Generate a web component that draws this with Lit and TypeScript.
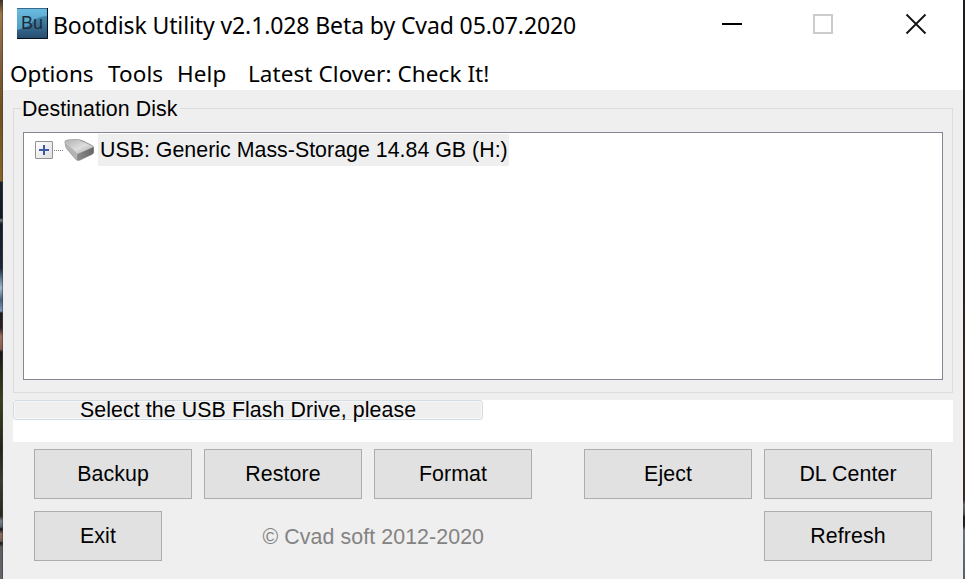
import { LitElement, html, css } from "lit";
import { customElement, property } from "lit/decorators.js";

@customElement("push-button")
class PushButton extends LitElement {
  @property() label = "";
  static styles = css`
    :host { display: block; height: 50px; }
    button {
      width: 100%; height: 100%; box-sizing: border-box; padding: 0;
      border: 1px solid #adadad; background: #e1e1e1; color: #000;
      font: inherit; letter-spacing: inherit; border-radius: 0;
    }
  `;
  render() {
    return html`<button>${this.label}</button>`;
  }
}

@customElement("app-root")
class AppRoot extends LitElement {
  static styles = css`
    :host {
      display: flex; box-sizing: border-box; width: 965px; height: 579px; overflow: hidden;
      font: 21.33px/24px "Liberation Sans", Arial, sans-serif; letter-spacing: 0.09px; color: #000;
      white-space: nowrap;
    }
    .edge-left {
      width: 3px; flex: none;
      background:
        linear-gradient(90deg, transparent 2px, rgba(60, 60, 60, 0.55) 2px),
        linear-gradient(#3c3022 0, #a07848 14px, #84603c 60px, #70501f 110px, #876525 181px, #17202c 182px,
          #101823 218px, #777f89 220px, #131b29 224px, #1b2638 268px, #5b7390 278px, #a4b9d0 288px,
          #48607e 300px, #7f9bbd 311px, #211c20 313px, #2a2022 328px, #9b6c5e 336px, #8a5d50 349px,
          #161616 352px, #2b3118 376px, #38411f 400px, #20271b 450px, #3a3c2d 480px, #29291f 516px,
          #78848e 521px, #55606b 527px, #111 529px, #8d6e61 534px, #775f54 541px, #151515 543px,
          #5d5d62 547px, #66666c 579px);
    }
    .edge-right {
      width: 2px; flex: none;
      background: linear-gradient(#1a1e24 0, #1b1b1d 160px, #241b1a 260px, #3b2523 370px, #3d2725 500px,
        #62676c 505px, #484c51 514px, #1b1c21 517px, #20242a 526px, #666d72 530px, #646c72 546px, #586167 579px);
    }
    .window { width: 960px; flex: none; display: flex; flex-direction: column; background: #efefef; }
    .title-bar, .menu { background: #fff; font-family: "Noto Sans", "Open Sans", sans-serif; }
    .title-bar { height: 50px; display: flex; align-items: flex-start; padding-left: 14px; }
    .logo { width: 31px; height: 31px; margin-top: 8px; }
    .title { font-size: 23px; line-height: 32px; margin: 9px 0 0 5px; letter-spacing: -0.11px; flex: 1; }
    .controls { display: flex; justify-content: space-between; width: 206px; margin: 13px 36px 0 0; }
    .controls svg { width: 22px; height: 22px; flex: none; }
    .menu { height: 40px; display: flex; font-size: 22.5px; line-height: 32px; padding: 8px 0 0 7px; box-sizing: border-box; }
    .menu .options { width: 98px; letter-spacing: 0; }
    .menu .tools { width: 69px; }
    .menu .help { width: 71px; }
    .menu .clover { letter-spacing: 0.07px; }
    fieldset {
      box-sizing: border-box; width: 940px; height: 297px; min-width: 0;
      margin: 6px 0 0 10px; padding: 11px 9px 0; border: 1px solid #dcdcdc;
    }
    legend { margin-left: -2px; padding: 0 2px 0 1px; height: 25px; line-height: 26px; }
    .tree {
      box-sizing: border-box; width: 920px; height: 248px; background: #fff;
      border: 1px solid #828790; padding: 1px 0 0 11px;
    }
    .node { display: flex; align-items: center; height: 32px; }
    .expander { width: 18px; height: 18px; }
    .branch { width: 9px; border-top: 1px dotted #808080; margin-left: 1px; }
    .drive { width: 32px; height: 32px; }
    .node-label {
      background: #efefef; height: 32px; line-height: 32px; width: 411px; margin-left: 3px;
      padding-left: 2px; box-sizing: border-box; letter-spacing: 0.03px;
    }
    .status { width: 940px; height: 42px; margin: 7px 0 0 10px; background: #fff; }
    .progress {
      box-sizing: border-box; width: 470px; height: 20px; border: 1px solid #d5dde4; border-radius: 3px;
      background: #efefef; line-height: 18px; padding-left: 66px; box-shadow: inset 0 0 0 1px #f7f7f7;
    }
    .actions {
      display: grid; grid-template-columns: 158px 158px 158px 168px 168px; grid-template-rows: 50px 50px;
      column-gap: 12px; row-gap: 12px; margin: 7px 0 0 31px;
    }
    .eject, .center, .refresh { margin-left: 40px; width: 168px; }
    .exit { width: 128px; }
    .credit { grid-column: 2 / 5; color: #838383; line-height: 52px; padding-left: 58.5px; }
  `;

  logo() {
    return html`<svg class="logo" viewBox="0 0 31 31">
      <defs>
        <linearGradient id="sky" x2="0" y2="1"><stop stop-color="#6bbce0" /><stop offset="1" stop-color="#4290b8" /></linearGradient>
        <linearGradient id="sea" x2="0" y2="1"><stop stop-color="#4588ad" /><stop offset="1" stop-color="#284d70" /></linearGradient>
      </defs>
      <path d="M0 0H31V31H0Z" fill="url(#sky)" />
      <path d="M0 22C6 21 9 19 14 15C19 10 24 8 30 8V30H0Z" fill="url(#sea)" />
      <path d="M0 .5H31" stroke="#386d8a" />
      <path d="M30.5 0V30.5H0" fill="none" stroke="#06101b" />
      <text x="4" y="21" font-family="Liberation Sans" font-size="18" textLength="22" fill="#1c2b38">Bu</text>
    </svg>`;
  }

  render() {
    return html`
      <div class="edge-left"></div>
      <main class="window">
        <header class="title-bar">
          ${this.logo()}
          <span class="title">Bootdisk Utility v2.1.028 Beta by Cvad 05.07.2020</span>
          <div class="controls">
            <svg viewBox="0 0 22 22"><path d="M1 11H21" stroke="#000" stroke-width="2" /></svg>
            <svg viewBox="0 0 22 22"><path d="M1 2H19V20H1Z" fill="none" stroke="#ccc" stroke-width="2" /></svg>
            <svg viewBox="0 0 22 22"><path d="M1.5 1.5L20.5 20.5M20.5 1.5L1.5 20.5" fill="none" stroke="#111" stroke-width="1.8" /></svg>
          </div>
        </header>
        <nav class="menu">
          <span class="options">Options</span><span class="tools">Tools</span><span class="help">Help</span><span class="clover">Latest Clover: Check It!</span>
        </nav>
        <fieldset>
          <legend>Destination Disk</legend>
          <div class="tree">
            <div class="node">
              <svg class="expander" viewBox="0 0 18 18">
                <defs><linearGradient id="face" x2="1" y2="1"><stop stop-color="#fff" /><stop offset="1" stop-color="#dedede" /></linearGradient></defs>
                <rect x=".5" y=".5" width="17" height="17" rx=".5" fill="url(#face)" stroke="#919191" />
                <path d="M4 9H14M9 4V14" stroke="#3c5aa4" stroke-width="2" />
              </svg>
              <span class="branch"></span>
              <svg class="drive" viewBox="0 0 32 32">
                <defs>
                  <linearGradient id="top" x2="1" y2="1"><stop stop-color="#adadad" /><stop offset=".55" stop-color="#dedede" /><stop offset="1" stop-color="#a9a9a9" /></linearGradient>
                  <linearGradient id="side" x2="1"><stop stop-color="#8c8c8c" /><stop offset="1" stop-color="#666" /></linearGradient>
                </defs>
                <path d="M1.5 7.5Q2 6 5 5.5L14 5Q17 5 20 6.5L29 11Q31 12 31 14V18.5Q31 20 29 20.8L17 26.5Q15 27.4 13 26L3.5 15Q1.5 12 1.5 7.5Z" fill="#9b9b9b" />
                <path d="M2 8Q2 6.5 5 6L15 5.5L30 12.5L14.5 19.5Z" fill="url(#top)" />
                <path d="M14.5 19.5L30.5 12.8V18.5L29 20.3L16 26.3L14 25.5Z" fill="url(#side)" />
                <path d="M2 9L14 19.5V26L4 14.5Q2.3 12 2 9Z" fill="#b5b5b5" />
                <path d="M2.5 8.5L14.5 19.5L29.5 13" fill="none" stroke="#d4d4d4" stroke-width=".8" />
              </svg>
              <span class="node-label">USB: Generic Mass-Storage 14.84 GB (H:)</span>
            </div>
          </div>
        </fieldset>
        <section class="status"><div class="progress">Select the USB Flash Drive, please</div></section>
        <section class="actions">
          <push-button label="Backup"></push-button>
          <push-button label="Restore"></push-button>
          <push-button label="Format"></push-button>
          <push-button class="eject" label="Eject"></push-button>
          <push-button class="center" label="DL Center"></push-button>
          <push-button class="exit" label="Exit"></push-button>
          <span class="credit">© Cvad soft 2012-2020</span>
          <push-button class="refresh" label="Refresh"></push-button>
        </section>
      </main>
      <div class="edge-right"></div>
    `;
  }
}
